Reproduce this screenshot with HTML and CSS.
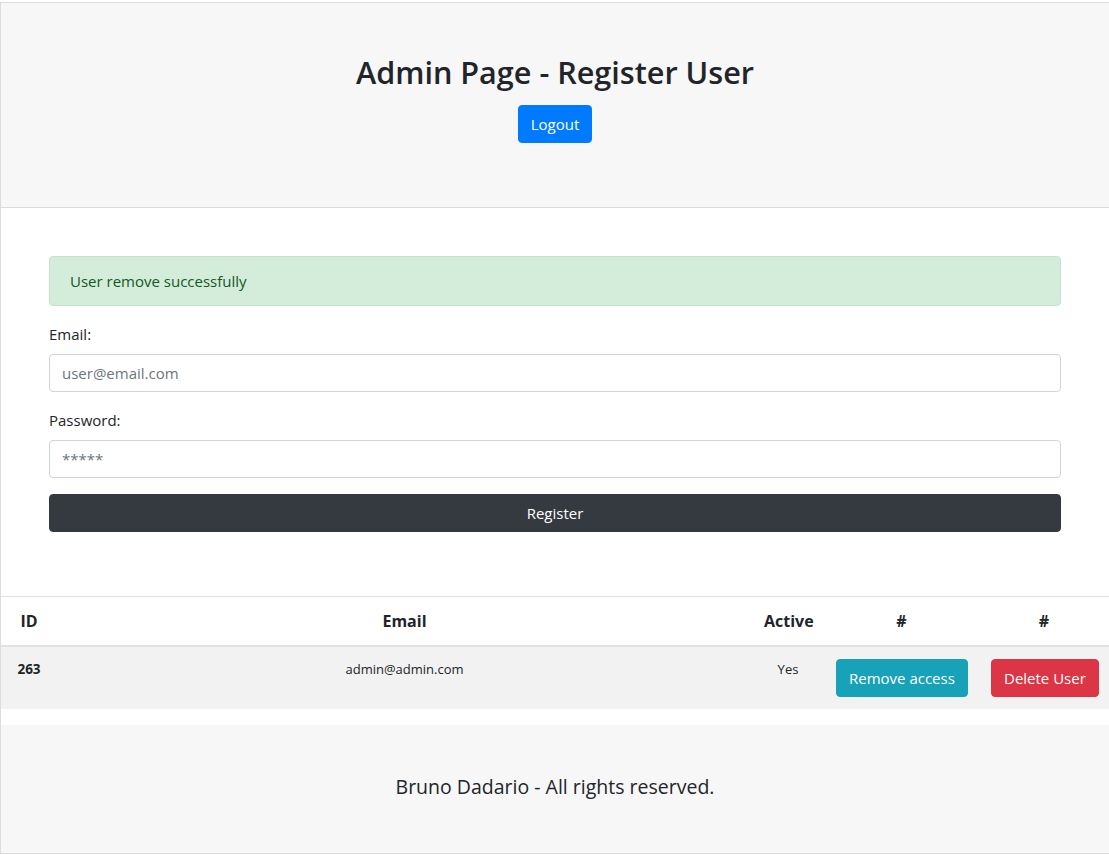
FILE: index.html
```html
<!DOCTYPE html>
<html lang="en">
<head>
<meta charset="utf-8">
<title>Admin Page - Register User</title>
<link rel="stylesheet" href="styles.css">
</head>
<body>
<div class="page">
  <header class="hero">
    <h1 class="hero-title">Admin Page - Register User</h1>
    <div class="hero-actions">
      <button class="btn btn-primary" type="button">Logout</button>
    </div>
  </header>

  <main class="content">
    <div class="alert">User remove successfully</div>
    <form class="register-form">
      <div class="form-group">
        <label class="form-label" for="email">Email:</label>
        <input class="form-control" id="email" type="email" placeholder="user@email.com">
      </div>
      <div class="form-group">
        <label class="form-label" for="password">Password:</label>
        <input class="form-control" id="password" type="password" placeholder="*****">
      </div>
      <button class="btn btn-dark btn-block" type="button">Register</button>
    </form>
  </main>

  <table class="users-table">
    <colgroup>
      <col class="col-id">
      <col class="col-email">
      <col class="col-active">
      <col class="col-remove">
      <col class="col-delete">
    </colgroup>
    <thead>
      <tr>
        <th>ID</th>
        <th>Email</th>
        <th>Active</th>
        <th>#</th>
        <th>#</th>
      </tr>
    </thead>
    <tbody>
      <tr class="striped">
        <th class="row-id">263</th>
        <td>admin@admin.com</td>
        <td>Yes</td>
        <td><button class="btn btn-info" type="button">Remove access</button></td>
        <td><button class="btn btn-danger" type="button">Delete User</button></td>
      </tr>
    </tbody>
  </table>

  <footer class="footer">
    <h5 class="footer-text">Bruno Dadario - All rights reserved.</h5>
  </footer>
</div>
</body>
</html>
```

FILE: styles.css
```css
* {
  box-sizing: border-box;
}

html, body {
  margin: 0;
  padding: 0;
  background: #fff;
}

body {
  font-family: "Open Sans", "Noto Sans", "Liberation Sans", sans-serif;
  font-size: 15px;
  line-height: 24px;
  color: #212529;
  overflow: hidden;
}

.page {
  margin-top: 2px;
  border-left: 1px solid #dcdcdc;
}

.hero {
  background: #f7f7f7;
  border-top: 1px solid #dcdcdc;
  border-bottom: 1px solid #dcdcdc;
  padding: 48px 0;
  text-align: center;
}

.hero-title {
  margin: 0 0 12px;
  font-size: 30.6px;
  line-height: 42px;
  font-weight: 600;
  color: #212529;
}

.hero-actions {
  margin-bottom: 16px;
}

.btn {
  display: inline-block;
  font-family: inherit;
  font-size: 15px;
  line-height: 24px;
  font-weight: 400;
  padding: 6px 12px;
  border: 1px solid transparent;
  border-radius: 4px;
  color: #fff;
  cursor: pointer;
  height: 38px;
}

.btn-primary {
  background: #007bff;
  border-color: #007bff;
}

.btn-dark {
  background: #343a40;
  border-color: #343a40;
}

.btn-info {
  background: #17a2b8;
  border-color: #17a2b8;
}

.btn-danger {
  background: #dc3545;
  border-color: #dc3545;
}

.btn-block {
  display: block;
  width: 100%;
}

.content {
  padding: 48px 48px;
}

.alert {
  background: #d4edda;
  border: 1px solid #c3e6cb;
  color: #155724;
  border-radius: 4px;
  padding: 12px 20px;
  margin-bottom: 16px;
  line-height: 24px;
}

.register-form {
  margin-bottom: 16px;
}

.form-group {
  margin-bottom: 16px;
}

.form-label {
  display: block;
  margin-bottom: 8px;
  line-height: 24px;
}

.form-control {
  display: block;
  width: 100%;
  height: 38px;
  padding: 6px 12px;
  font-family: inherit;
  font-size: 15px;
  line-height: 24px;
  color: #495057;
  background: #fff;
  border: 1px solid #ced4da;
  border-radius: 4px;
}

.form-control::placeholder {
  color: #6c757d;
  opacity: 1;
}

.users-table {
  width: 100%;
  table-layout: fixed;
  border-collapse: collapse;
  margin-bottom: 16px;
}

.col-id { width: 56px; }
.col-active { width: 72px; }
.col-remove { width: 155px; }
.col-delete { width: 130px; }

.users-table th,
.users-table td {
  padding: 12px;
  text-align: center;
  vertical-align: top;
  border-top: 1px solid #dee2e6;
  white-space: nowrap;
}

.users-table thead th {
  font-size: 16px;
  font-weight: 700;
  line-height: 24px;
  border-bottom: 2px solid #dee2e6;
}

.users-table tbody th,
.users-table tbody td {
  font-size: 13px;
  line-height: 21px;
}

.users-table tbody .row-id {
  font-size: 13.5px;
  font-weight: 700;
}

.users-table tbody .btn {
  font-size: 15px;
  line-height: 24px;
}

.striped {
  background: #f2f2f2;
}

.footer {
  background: #f7f7f7;
  border-bottom: 1px solid #dcdcdc;
  padding: 50px 0 46px;
  text-align: center;
}

.footer-text {
  margin: 0 0 8px;
  font-size: 19.5px;
  line-height: 24px;
  font-weight: 500;
  color: #212529;
}
```
